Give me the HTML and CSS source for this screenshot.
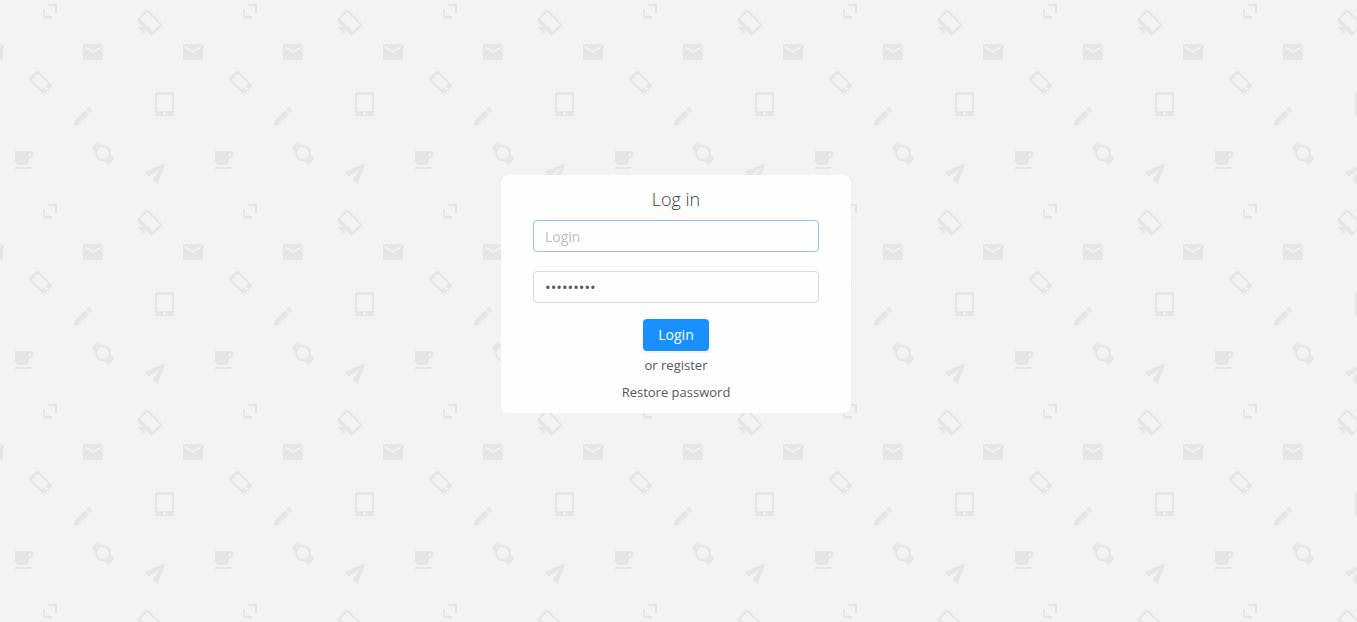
FILE: index.html
```html
<!DOCTYPE html>
<html lang="en">
<head>
    <meta charset="UTF-8">
    <meta name="viewport" content="width=device-width, initial-scale=1">
    <title>Log in</title>
    <link rel="stylesheet" href="styles.css">
</head>
<body>
    <!-- Background pattern, repeats every 200px -->
    <svg class="pattern" aria-hidden="true">
        <defs>
            <path id="mail" d="M20 4H4c-1.1 0-1.99.9-1.99 2L2 18c0 1.1.9 2 2 2h16c1.1 0 2-.9 2-2V6c0-1.1-.9-2-2-2zm0 4l-8 5-8-5V6l8 5 8-5v2z"/>
            <pattern id="icons" width="200" height="200" patternUnits="userSpaceOnUse">
                <g class="pattern-icons">
                    <!-- corners -->
                    <path d="M48 4h9v9h-2V6h-7zM43 9h2v7h7v2h-9z"/>
                    <use href="#mail" x="-19" y="40"/>
                    <use href="#mail" x="81" y="40"/>
                    <use href="#mail" x="181" y="40"/>
                    <!-- monitor -->
                    <path transform="translate(149.5 22.5) rotate(45) translate(-12 -10)" d="M21 2H3c-1.1 0-2 .9-2 2v12c0 1.1.9 2 2 2h7l-2 3v1h8v-1l-2-3h7c1.1 0 2-.9 2-2V4c0-1.1-.9-2-2-2zm0 12H3V4h18v10z"/>
                    <!-- phone -->
                    <path transform="translate(40.5 82.3) rotate(-45) translate(-11.5 -12)" d="M15.5 1h-8C6.12 1 5 2.12 5 3.5v17C5 21.88 6.12 23 7.5 23h8c1.38 0 2.5-1.12 2.5-2.5v-17C18 2.12 16.88 1 15.5 1zm-4 21c-.83 0-1.5-.67-1.5-1.5s.67-1.5 1.5-1.5 1.5.67 1.5 1.5-.67 1.5-1.5 1.5zm4.5-4H7V4h9v14z"/>
                    <!-- tablet -->
                    <path transform="translate(153 92)" d="M18.5 0h-14C3.12 0 2 1.12 2 2.5v19C2 22.88 3.12 24 4.5 24h14c1.38 0 2.5-1.12 2.5-2.5v-19C21 1.12 19.88 0 18.5 0zm-7 23c-.83 0-1.5-.67-1.5-1.5s.67-1.5 1.5-1.5 1.5.67 1.5 1.5-.67 1.5-1.5 1.5zm7.5-4H4V3h15v16z"/>
                    <!-- pencil -->
                    <path transform="translate(71 104)" d="M3 17.25V21h3.75L17.81 9.94l-3.75-3.75L3 17.25zM20.71 7.04c.39-.39.39-1.02 0-1.41l-2.34-2.34c-.39-.39-1.02-.39-1.41 0l-1.83 1.83 3.75 3.75 1.83-1.83z"/>
                    <!-- cup -->
                    <path transform="translate(11 148)" d="M20 3H4v10c0 2.21 1.79 4 4 4h6c2.21 0 4-1.79 4-4v-3h2c1.11 0 2-.89 2-2V5c0-1.11-.89-2-2-2zm0 5h-2V5h2v3zM4 19h16v2H4z"/>
                    <!-- watch -->
                    <path transform="translate(103 153.3) rotate(-45) translate(-12 -12)" d="M20 12c0-2.54-1.19-4.81-3.04-6.27L16 0H8l-.95 5.73C5.19 7.19 4 9.45 4 12s1.19 4.81 3.05 6.27L8 24h8l.96-5.73C18.81 16.81 20 14.54 20 12zM6 12c0-3.31 2.69-6 6-6s6 2.69 6 6-2.69 6-6 6-6-2.69-6-6z"/>
                    <!-- paper plane -->
                    <path transform="translate(158 171) rotate(-45) translate(-12 -12)" d="M2.01 21L23 12 2.01 3 2 10l15 2-15 2z"/>
                </g>
            </pattern>
        </defs>
        <rect width="100%" height="100%" fill="url(#icons)"/>
    </svg>

    <main class="page">
        <form class="login-form">
            <h1>Log in</h1>
            <input class="field active" type="text" name="login" placeholder="Login" aria-label="Login">
            <input class="field" type="password" name="password" value="password1" aria-label="Password">
            <button class="btn" type="submit">Login</button>
            <a href="#register">or register</a>
            <a href="#restore">Restore password</a>
        </form>
    </main>
</body>
</html>
```

FILE: styles.css
```css
* { box-sizing: border-box; }
body {
    margin: 0;
    background: #f3f3f3;
    color: #595959;
    font: 14px/22px "Segoe UI", "Open Sans", sans-serif;
}
.pattern {
    position: fixed;
    inset: 0;
    z-index: -1;
    width: 100%;
    height: 100%;
}
.pattern-icons { fill: #e6e6e6; }
.page {
    display: flex;
    align-items: center;
    justify-content: center;
    min-height: 100vh;
    padding: 0 5px 34px 0;
}
.login-form {
    display: flex;
    flex-direction: column;
    align-items: center;
    width: 100%;
    max-width: 350px;
    padding: 12px 32px 10px;
    background: #fefefe;
    border-radius: 8px;
}
h1 {
    margin: 0 0 9px;
    color: #404040;
    font-size: 18px;
    font-weight: 300;
    line-height: 24px;
}
.field {
    width: 100%;
    height: 32px;
    margin-bottom: 19px;
    padding: 4px 11px;
    border: 1px solid #d9d9d9;
    border-radius: 4px;
    background: #fefefe;
    color: #595959;
    font: inherit;
    outline: none;
}
.field::placeholder { color: #bfbfbf; }
.field.active { border-color: #91c3f0; }
.field[type="password"] {
    margin-bottom: 16px;
    font-size: 15px;
}
.btn {
    height: 32px;
    margin-bottom: 3px;
    padding: 0 15px;
    border: 0;
    border-radius: 4px;
    background: #1890ff;
    color: #fff;
    font: inherit;
    box-shadow: 0 2px 0 rgba(0, 0, 0, 0.04);
    cursor: pointer;
}
a {
    color: #595959;
    font-size: 13px;
    text-decoration: none;
}
a + a { margin-top: 5px; }
```
